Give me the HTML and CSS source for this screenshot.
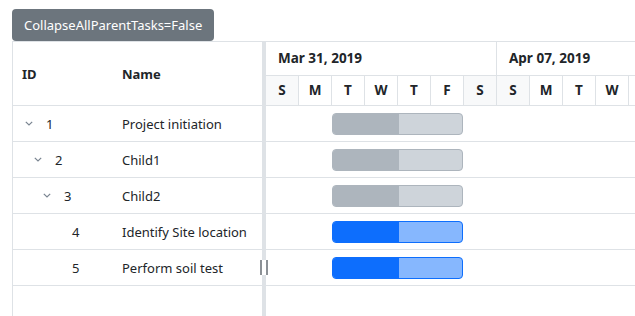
FILE: index.html
```html
<!DOCTYPE html>
<html>
<head>
<meta charset="utf-8">
<link rel="stylesheet" href="styles.css">
</head>
<body>
<div class="page">
  <button class="btn">CollapseAllParentTasks=False</button>
  <div class="gantt">
    <div class="grid">
      <div class="grid-head">
        <div class="c-id">ID</div>
        <div class="c-name">Name</div>
      </div>
      <div class="g-row">
        <div class="c-id lvl0"><span class="chev"><svg width="8" height="5" viewBox="0 0 8 5"><polyline points="0.8,0.8 4,4 7.2,0.8" fill="none" stroke="#7a8591" stroke-width="1.2"/></svg></span><span>1</span></div>
        <div class="c-name">Project initiation</div>
      </div>
      <div class="g-row">
        <div class="c-id lvl1"><span class="chev"><svg width="8" height="5" viewBox="0 0 8 5"><polyline points="0.8,0.8 4,4 7.2,0.8" fill="none" stroke="#7a8591" stroke-width="1.2"/></svg></span><span>2</span></div>
        <div class="c-name">Child1</div>
      </div>
      <div class="g-row">
        <div class="c-id lvl2"><span class="chev"><svg width="8" height="5" viewBox="0 0 8 5"><polyline points="0.8,0.8 4,4 7.2,0.8" fill="none" stroke="#7a8591" stroke-width="1.2"/></svg></span><span>3</span></div>
        <div class="c-name">Child2</div>
      </div>
      <div class="g-row">
        <div class="c-id leaf"><span>4</span></div>
        <div class="c-name">Identify Site location</div>
      </div>
      <div class="g-row">
        <div class="c-id leaf"><span>5</span></div>
        <div class="c-name">Perform soil test</div>
      </div>
    </div>
    <div class="splitter"><div class="handle"><i></i><i></i></div></div>
    <div class="timeline">
      <div class="t-head">
        <div class="weeks">
          <div class="week">Mar 31, 2019</div>
          <div class="week">Apr 07, 2019</div>
        </div>
        <div class="days">
          <div class="day we">S</div><div class="day">M</div><div class="day">T</div><div class="day">W</div><div class="day">T</div><div class="day">F</div><div class="day we">S</div>
          <div class="day we">S</div><div class="day">M</div><div class="day">T</div><div class="day">W</div><div class="day">T</div><div class="day">F</div><div class="day we">S</div>
        </div>
      </div>
      <div class="t-row"><div class="bar parent"><div class="prog"></div></div></div>
      <div class="t-row"><div class="bar parent"><div class="prog"></div></div></div>
      <div class="t-row"><div class="bar parent"><div class="prog"></div></div></div>
      <div class="t-row"><div class="bar task"><div class="prog"></div></div></div>
      <div class="t-row"><div class="bar task"><div class="prog"></div></div></div>
    </div>
  </div>
</div>
</body>
</html>
```

FILE: styles.css
```css
* { box-sizing: border-box; }
html, body { margin: 0; padding: 0; overflow: hidden; background: #fff; }
body {
  font-family: "Noto Sans", "Open Sans", sans-serif;
  font-size: 13px;
  color: #212529;
}
.page {
  padding: 9px 0 0 12px;
  width: 900px;
}
.btn {
  display: block;
  height: 32px;
  padding: 0 12px;
  border: none;
  border-radius: 4px;
  background: #6c757d;
  color: #fff;
  font-family: inherit;
  font-size: 13px;
  line-height: 32px;
}
.gantt {
  display: flex;
  height: 400px;
  border-top: 1px solid #dee2e6;
  border-left: 1px solid #dee2e6;
}
.grid {
  width: 249px;
  flex: none;
}
.grid-head {
  display: flex;
  align-items: center;
  height: 64px;
  border-bottom: 1px solid #dee2e6;
  font-weight: bold;
}
.c-id {
  width: 100px;
  padding-left: 9px;
  display: flex;
  align-items: center;
}
.c-name {
  padding-left: 9px;
  white-space: nowrap;
}
.g-row {
  display: flex;
  align-items: center;
  height: 36px;
  border-bottom: 1px solid #dee2e6;
}
.chev {
  display: inline-flex;
  align-items: center;
  width: 24px;
  padding-left: 3px;
  height: 20px;
}
.chev svg { display: block; }
.lvl0 { padding-left: 9px; }
.lvl1 { padding-left: 18px; }
.lvl2 { padding-left: 27px; }
.leaf { padding-left: 59px; }
.splitter {
  width: 4px;
  flex: none;
  background: #dee2e6;
  position: relative;
}
.handle {
  position: absolute;
  left: -3px;
  top: 218px;
  width: 10px;
  height: 15px;
  background: #fff;
  display: flex;
  justify-content: space-between;
  padding: 0 1px;
}
.handle i {
  display: block;
  width: 2px;
  height: 15px;
  background: #8c9196;
}
.timeline {
  flex: 1;
  overflow: hidden;
}
.t-head {
  height: 64px;
  border-bottom: 1px solid #dee2e6;
  font-weight: bold;
  font-size: 13.5px;
}
.weeks {
  display: flex;
  height: 34px;
  border-bottom: 1px solid #dee2e6;
}
.week {
  width: 231px;
  flex: none;
  border-right: 1px solid #dee2e6;
  padding-left: 12px;
  line-height: 33px;
  white-space: nowrap;
}
.days {
  display: flex;
  height: 29px;
}
.day {
  width: 33px;
  flex: none;
  border-right: 1px solid #dee2e6;
  text-align: center;
  line-height: 29px;
}
.day.we { background: #f8f9fa; }
.t-row {
  height: 36px;
  border-bottom: 1px solid #dee2e6;
  display: flex;
  align-items: center;
  padding-left: 66px;
}
.bar {
  width: 131px;
  height: 22px;
  border-radius: 4px;
  border: 1px solid;
  overflow: hidden;
  display: flex;
}
.prog { width: 66px; height: 100%; }
.bar.parent { background: #ced4da; border-color: #adb5bd; }
.bar.parent .prog { background: #adb5bd; }
.bar.task { background: #86b7fe; border-color: #0d6efd; }
.bar.task .prog { background: #0d6efd; }
```
